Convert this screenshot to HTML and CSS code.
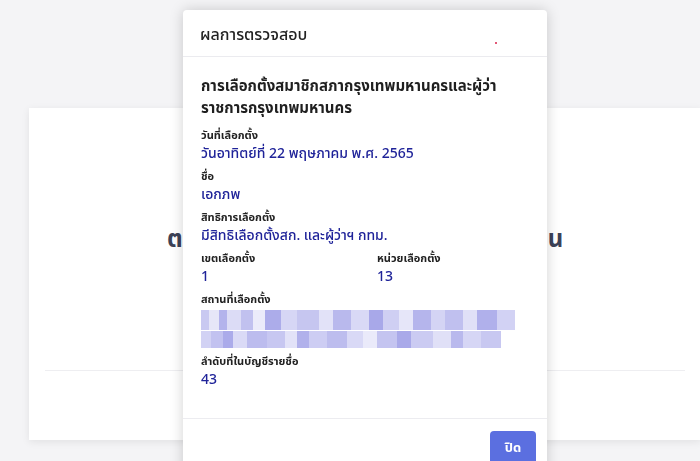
FILE: index.html
```html
<!DOCTYPE html>
<html lang="th">
<head>
    <meta charset="UTF-8">
    <meta name="viewport" content="width=device-width, initial-scale=1.0">
    <title>ตรวจสอบสิทธิเลือกตั้ง</title>
    <link rel="stylesheet" href="styles.css">
</head>
<body>
    <!-- หน้าหลักด้านหลัง -->
    <div class="page">
        <div class="card">
            <h2 class="card-title">ตรวจสอบสิทธิและหน่วยเลือกตั้งของท่าน</h2>
            <div class="card-line"></div>
        </div>
    </div>

    <!-- หน้าต่างผลการตรวจสอบ -->
    <div class="modal">
        <div class="modal-header">
            <span class="modal-heading">ผลการตรวจสอบ</span>
            <span class="dot"></span>
        </div>
        <div class="modal-body">
            <h3 class="election">การเลือกตั้งสมาชิกสภากรุงเทพมหานครและผู้ว่าราชการกรุงเทพมหานคร</h3>

            <div class="field">
                <div class="label">วันที่เลือกตั้ง</div>
                <div class="value">วันอาทิตย์ที่ 22 พฤษภาคม พ.ศ. 2565</div>
            </div>
            <div class="field">
                <div class="label">ชื่อ</div>
                <div class="value">เอกภพ</div>
            </div>
            <div class="field">
                <div class="label">สิทธิการเลือกตั้ง</div>
                <div class="value">มีสิทธิเลือกตั้งสก. และผู้ว่าฯ กทม.</div>
            </div>
            <div class="field-row">
                <div class="field">
                    <div class="label">เขตเลือกตั้ง</div>
                    <div class="value">1</div>
                </div>
                <div class="field">
                    <div class="label">หน่วยเลือกตั้ง</div>
                    <div class="value">13</div>
                </div>
            </div>
            <div class="field">
                <div class="label">สถานที่เลือกตั้ง</div>
                <div class="mosaic">
                    <div class="mosaic-line line-a"></div>
                    <div class="mosaic-line line-b"></div>
                </div>
            </div>
            <div class="field">
                <div class="label">ลำดับที่ในบัญชีรายชื่อ</div>
                <div class="value">43</div>
            </div>
        </div>
        <div class="modal-footer">
            <button class="btn-close">ปิด</button>
        </div>
    </div>
</body>
</html>
```

FILE: styles.css
```css
/* Общие стили */
body, html {
    margin: 0;
    padding: 0;
    height: 100%;
    font-family: 'Noto Sans', 'Noto Sans Thai', sans-serif;
    background: #f4f4f6;
    overflow: hidden;
}

/* Карточка на заднем плане */
.page {
    padding: 108px 0 0 29px;
}

.card {
    width: 640px;
    height: 332px;
    padding: 0 16px;
    background: #fff;
    box-shadow: 0 2px 8px rgba(0, 0, 0, 0.08);
    display: flex;
    flex-direction: column;
}

.card-title {
    margin: 113px 0 0;
    font-size: 24px;
    line-height: 34px;
    font-weight: 700;
    letter-spacing: -0.2px;
    color: #3c4257;
    text-align: center;
    white-space: nowrap;
}

.card-line {
    margin-top: 115px;
    border-top: 1px solid #eeeef1;
}

/* Модальное окно */
.modal {
    position: fixed;
    top: 10px;
    left: 183px;
    width: 364px;
    background: #fff;
    border-radius: 4px 4px 0 0;
    box-shadow: 0 0 14px rgba(0, 0, 0, 0.18);
}

.modal-header {
    position: relative;
    height: 46px;
    padding: 0 17px;
    display: flex;
    align-items: center;
    border-bottom: 1px solid #ebebef;
}

.modal-heading {
    font-size: 16px;
    font-weight: 500;
    color: #222;
    padding-top: 3px;
}

.dot {
    position: absolute;
    left: 312px;
    top: 32px;
    width: 2px;
    height: 2px;
    border-radius: 50%;
    background: #d8204a;
}

.modal-body {
    padding: 17px 18px 25px;
}

.election {
    margin: 0 0 8px;
    font-size: 15px;
    line-height: 22px;
    font-weight: 700;
    color: #1f1f1f;
}

.field {
    margin-bottom: 4px;
}

.field-row {
    display: grid;
    grid-template-columns: 1fr 1fr;
    column-gap: 24px;
}

.label {
    font-size: 11px;
    line-height: 17px;
    font-weight: 700;
    color: #222;
}

.value {
    font-size: 14px;
    line-height: 20px;
    font-weight: 500;
    color: #1f2399;
}

/* Замазанный адрес */
.mosaic {
    padding: 3px 0 0;
}

.mosaic-line {
    height: 20px;
    margin-bottom: 1px;
}

.line-a {
    width: 314px;
    background:
        linear-gradient(90deg,
            #c9c9f1 0 8px, #e6e6f8 8px 18px, #b3b3ec 18px 26px, #dcdcf6 26px 40px,
            #c1c1ef 40px 52px, #ebebfa 52px 64px, #acacea 64px 80px, #d6d6f5 80px 96px,
            #c6c6f0 96px 118px, #e2e2f8 118px 132px, #b9b9ed 132px 150px, #d9d9f6 150px 168px,
            #a8a8e9 168px 182px, #cfcff3 182px 198px, #e6e6f9 198px 212px, #b5b5ec 212px 230px,
            #d4d4f4 230px 244px, #c0c0ef 244px 262px, #e0e0f7 262px 276px, #b0b0eb 276px 296px,
            #d2d2f4 296px 314px);
}

.line-b {
    width: 300px;
    height: 17px;
    background:
        linear-gradient(90deg,
            #d2d2f4 0 10px, #c2c2f0 10px 22px, #ababea 22px 32px, #dadaf6 32px 46px,
            #bcbcee 46px 66px, #c7c7f1 66px 84px, #e2e2f8 84px 96px, #b1b1eb 96px 108px,
            #cdcdf3 108px 126px, #bdbdee 126px 146px, #d9d9f6 146px 162px, #eaeafa 162px 176px,
            #c4c4f0 176px 196px, #a9a9e9 196px 210px, #cbcbf2 210px 232px, #e0e0f7 232px 250px,
            #b9b9ed 250px 262px, #d6d6f5 262px 280px, #c8c8f1 280px 300px);
}

/* Подвал с кнопкой */
.modal-footer {
    border-top: 1px solid #ececf0;
    padding: 12px 11px;
    display: flex;
    justify-content: flex-end;
}

.btn-close {
    width: 46px;
    height: 34px;
    border: none;
    border-radius: 4px;
    background: #5b6fe0;
    color: #fff;
    font-family: inherit;
    font-size: 13px;
    font-weight: 700;
    cursor: pointer;
}
```
